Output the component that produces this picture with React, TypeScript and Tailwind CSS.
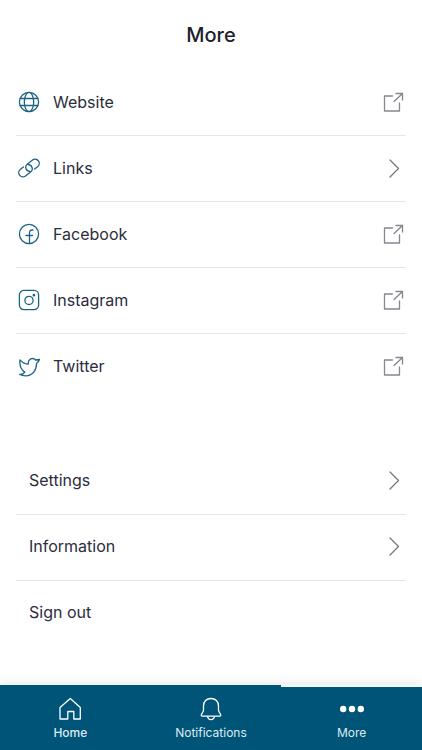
import React from 'react';
import { clsx } from 'clsx';

type IconProps = { children: React.ReactNode; className?: string };

const Icon = ({ children, className }: IconProps) => (
  <svg
    viewBox="0 0 22 22"
    fill="none"
    stroke="currentColor"
    strokeWidth="1.3"
    strokeLinecap="round"
    strokeLinejoin="round"
    aria-hidden="true"
    className={clsx('w-[22px] h-[22px] shrink-0', className)}
  >
    {children}
  </svg>
);

const GlobeIcon = () => (
  <Icon>
    <circle cx="11" cy="11" r="9.6" />
    <ellipse cx="11" cy="11" rx="4.7" ry="9.6" />
    <path d="M2.2 7.500h17.600M2.2 14.500h17.600" />
  </Icon>
);

const LinkIcon = () => (
  <Icon>
    <g transform="translate(11 11) rotate(-37)">
      <path d="M-3.800-4.200H-7.600a4.200 4.200 0 0 0 0 8.400H-1.200a4.200 4.200 0 0 0 2.600-7.500" />
      <path d="M3.800 4.200H7.600a4.200 4.200 0 0 0 0-8.400H1.200a4.200 4.200 0 0 0-2.600 7.500" />
    </g>
  </Icon>
);

const FacebookIcon = () => (
  <Icon>
    <circle cx="11" cy="11" r="9.6" />
    <path d="M15 7h-1.2a2.3 2.3 0 0 0-2.3 2.3v11.2M8 12.5h6.5" />
  </Icon>
);

const InstagramIcon = () => (
  <Icon>
    <rect x="1.4" y="1.4" width="19.2" height="19.2" rx="4.5" />
    <circle cx="11" cy="11.4" r="4.1" />
    <circle cx="15.9" cy="6.2" r="0.7" fill="currentColor" />
  </Icon>
);

const TwitterIcon = () => (
  <Icon>
    <path d="M2 4.800c2.200 2.600 4.800 4 8.300 4.300-.4-3.200 1.500-5.600 4.200-5.600 1.400 0 2.400.6 3.100 1.500 1.300 0 2.600-.2 3.900-.5-.4 1.500-1.500 2.800-2.900 3.700 0 7-4.200 12.600-10.800 12.600-2.200 0-4.300-.4-6-1.400 2.300.1 4-.9 5-2.300C2.800 14.500 1.400 10 2 4.800Z" />
  </Icon>
);

const ExternalIcon = () => (
  <Icon className="text-[#85868f]">
    <path d="M10.500 5h-8v15H17.500v-8M12 10.500l8.500-8M14 2.500h6.500V9" />
  </Icon>
);

const ChevronIcon = () => (
  <Icon className="text-[#74757f]">
    <path d="M8 3l8.500 8.500L8 20" />
  </Icon>
);

const links = [
  { label: 'Website', icon: <GlobeIcon />, external: true },
  { label: 'Links', icon: <LinkIcon />, external: false },
  { label: 'Facebook', icon: <FacebookIcon />, external: true },
  { label: 'Instagram', icon: <InstagramIcon />, external: true },
  { label: 'Twitter', icon: <TwitterIcon />, external: true },
];

const account = [
  { label: 'Settings', chevron: true },
  { label: 'Information', chevron: true },
  { label: 'Sign out', chevron: false },
];

const tabs = [
  {
    label: 'Home',
    bold: true,
    bar: true,
    icon: <path d="M2 10.500 12.300 1.500l10 9V22h-6.500v-7.500h-6V22H2Z" />,
  },
  {
    label: 'Notifications',
    bold: false,
    bar: true,
    icon: (
      <path d="M12 1.500c-4.500 0-7.500 3-7.500 7.500v4c0 2.300-2.300 3.600-2.300 5.300 0 .5.400.8.900.8h17.800c.5 0 .9-.3.9-.8 0-1.700-2.300-3-2.300-5.300V9c0-4.500-3-7.500-7.500-7.500ZM8.500 19.200c.4 2.300 1.700 3.400 3.500 3.400s3.100-1.100 3.500-3.400" />
    ),
  },
  {
    label: 'More',
    bold: false,
    bar: false,
    icon: (
      <g fill="currentColor" stroke="none">
        <circle cx="3.200" cy="12" r="3.200" />
        <circle cx="12" cy="12" r="3.200" />
        <circle cx="20.800" cy="12" r="3.200" />
      </g>
    ),
  },
];

const App = () => {
  return (
    <div className="min-h-screen flex flex-col bg-white text-[#2b2d3c] font-['Inter',sans-serif]">
      <header className="h-[70px] flex items-center justify-center">
        <h1 className="text-xl font-medium text-[#1d1f2e]">More</h1>
      </header>

      <main className="flex-1 px-4 pb-8">
        {/* Outside links */}
        <ul className="divide-y divide-[#e6e6e8]">
          {links.map((item) => (
            <li key={item.label}>
              <a href="#" className="h-[65px] px-0.5 pb-px flex items-center gap-[13px] text-[#1d6383]">
                {item.icon}
                <span className="flex-1 text-base text-[#2b2d3c]">{item.label}</span>
                {item.external ? <ExternalIcon /> : <ChevronIcon />}
              </a>
            </li>
          ))}
        </ul>

        {/* Account */}
        <ul className="mt-[50px] divide-y divide-[#e6e6e8]">
          {account.map((item) => (
            <li key={item.label}>
              <button type="button" className="w-full h-[65px] pl-[13px] pr-0.5 pb-[3px] flex items-center justify-between text-base text-left">
                <span>{item.label}</span>
                {item.chevron && <ChevronIcon />}
              </button>
            </li>
          ))}
        </ul>
      </main>

      <nav className="grid grid-cols-3 bg-[#005478] text-white shadow-[0_0_12px_rgba(0,0,0,0.12)]">
        {tabs.map((tab) => (
          <button
            key={tab.label}
            type="button"
            className={clsx(
              'flex flex-col items-center gap-1 pt-[10px] pb-[9px] border-t-2',
              tab.bar ? 'border-[#005478]' : 'border-[#f4f9fb]'
            )}
          >
            <svg
              viewBox="0 0 24 24"
              fill="none"
              stroke="currentColor"
              strokeWidth="1.300"
              strokeLinejoin="round"
              aria-hidden="true"
              className="w-6 h-6"
            >
              {tab.icon}
            </svg>
            <span className={clsx('text-xs text-[#dcebf2]', tab.bold && 'font-medium')}>{tab.label}</span>
          </button>
        ))}
      </nav>
    </div>
  );
};

export default App;
